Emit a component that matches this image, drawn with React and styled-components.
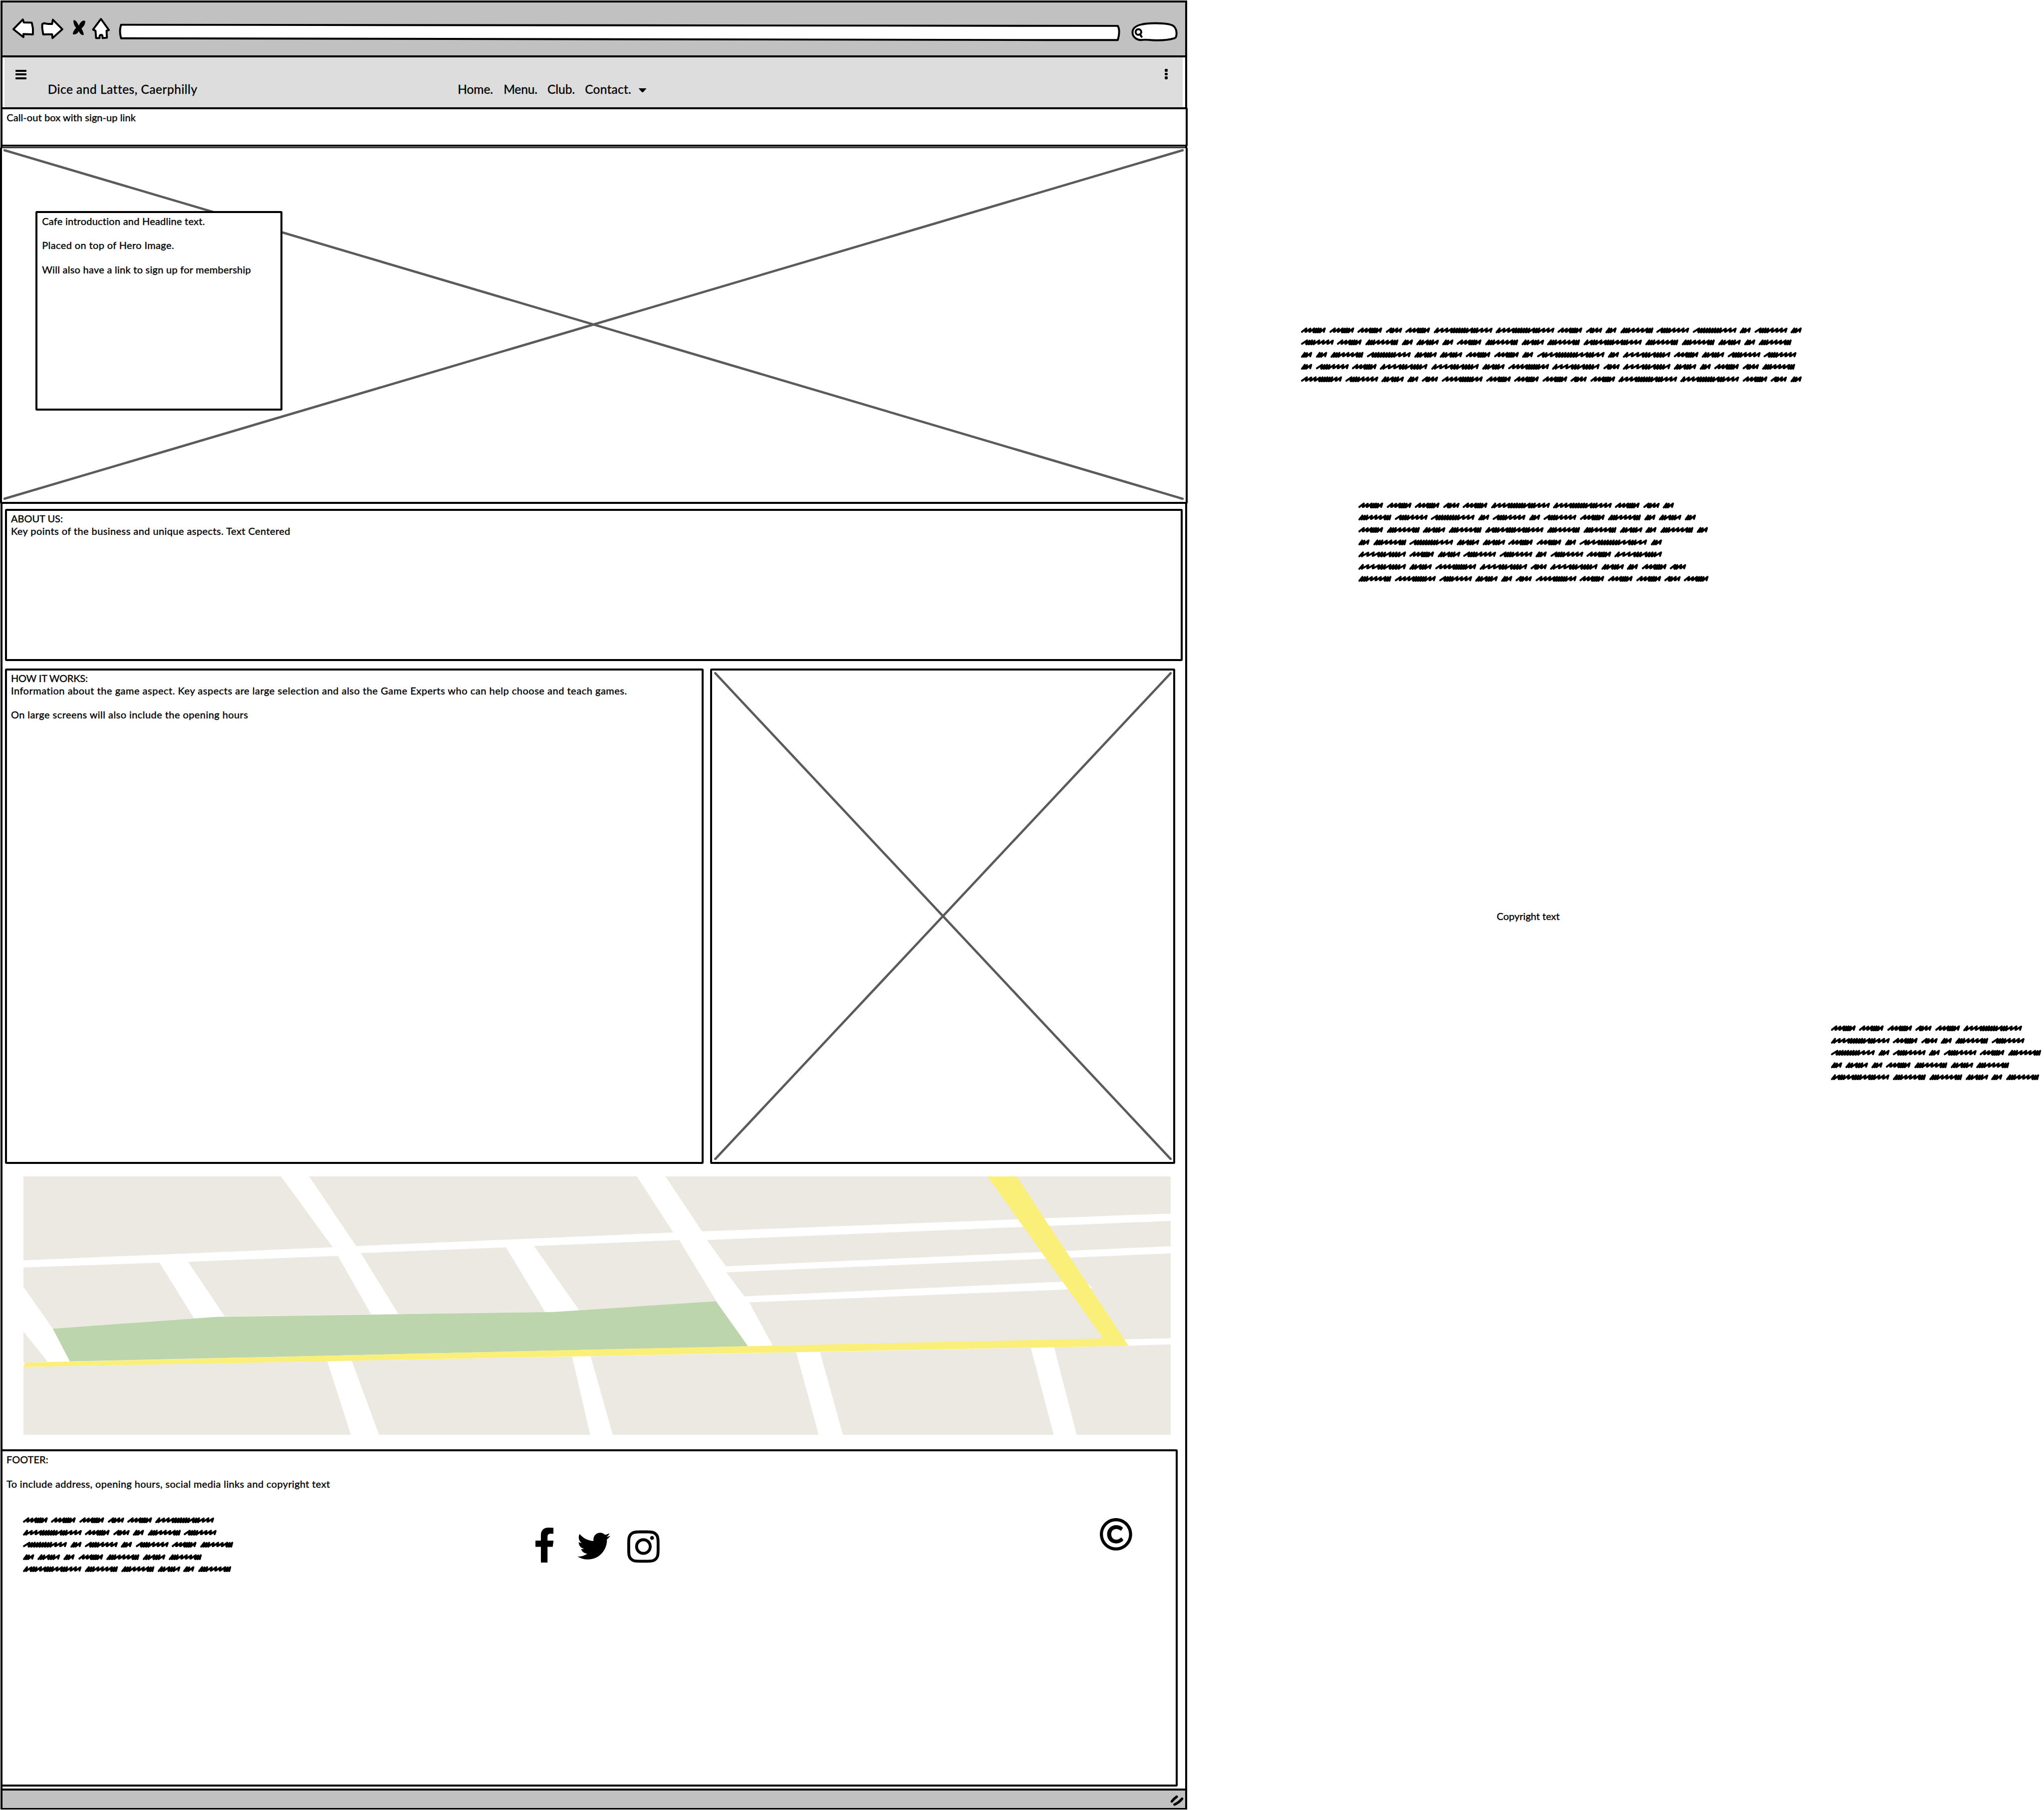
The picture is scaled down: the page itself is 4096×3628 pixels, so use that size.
import React from 'react';
import styled, { createGlobalStyle } from 'styled-components';
import { FaTwitter, FaInstagram, FaRegCopyright } from 'react-icons/fa';

const SCALE = 4096 / 5274;
const u = (n) => `${(n * SCALE).toFixed(3)}px`;

const GlobalStyle = createGlobalStyle`
  * { box-sizing: border-box; }
  body { margin: 0; background: #fff; color: #000; overflow: hidden; }
  svg { display: block; }
`;

const Board = styled.div`
  display: flex;
  width: 4096px;
  height: 3628px;
  font-family: Lato, "Liberation Sans", sans-serif;
  font-variant-ligatures: none;
  -webkit-text-stroke: 0.4px #000;
`;

const Browser = styled.div`
  flex: none;
  display: flex;
  flex-direction: column;
  width: ${u(3062)};
  height: ${u(4669)};
  margin: ${u(1)} 0 0 ${u(1)};
  border: 4px solid #000;
`;

const Toolbar = styled.div`
  flex: none;
  height: ${u(142)};
  background: #c1c1c1;
  border-bottom: 4px solid #000;
`;

const Nav = styled.nav`
  flex: none;
  height: ${u(129)};
  margin: 0 ${u(6)};
  padding-top: ${u(30)};
  background: #ddd;
`;

const NavTop = styled.div`
  display: flex;
  justify-content: space-between;
  align-items: flex-end;
  height: ${u(26)};
  padding: 0 ${u(39)} 0 ${u(27.5)};
`;

const Hamburger = styled.div`
  display: grid;
  gap: ${u(4)};
  width: ${u(28)};
  i { height: ${u(5.2)}; border-radius: 1px; background: #000; }
`;

const Kebab = styled.div`
  display: grid;
  gap: ${u(2)};
  width: ${u(7.3)};
  i { height: ${u(7.3)}; border-radius: 2px; background: #000; }
`;

const NavRow = styled.div`
  display: flex;
  margin-top: ${u(7)};
  padding-left: ${u(111)};
  font-size: ${u(31.5)};
  line-height: ${u(38)};
`;

const NavItem = styled.div`
  flex: none;
  width: ${(p) => u(p.$width)};
`;

const Caret = styled.div`
  width: ${u(19)};
  height: ${u(11)};
  margin-top: ${u(16.5)};
  background: #000;
  clip-path: polygon(0 0, 100% 0, 100% 12%, 60% 90%, 50% 100%, 40% 90%, 0 12%);
`;

const Line = styled.div`
  white-space: pre;
  letter-spacing: ${(p) => p.$tracking || 0}px;
`;

const Copy = styled.div`
  font-size: ${u(25.7)};
  line-height: ${u(31.3)};
`;

const Gap = styled.div`
  height: ${u(31.3)};
`;

const Box = styled.section`
  border: 4px solid #000;
  border-radius: 3px;
  background: #fff;
`;

const Callout = styled(Box)`
  flex: none;
  height: ${u(102)};
  margin: 0 -5px 0 -4px;
  padding: ${u(5)} 0 0 ${u(11)};
`;

const Hero = styled(Box)`
  position: relative;
  flex: none;
  height: ${u(920.5)};
  margin: ${u(1)} -5px 0 -5px;
  border-top-width: 2px;
`;

const Cross = styled.svg`
  position: absolute;
  left: ${(p) => u(p.$left)};
  top: ${(p) => u(p.$top)};
  width: ${(p) => u(p.$w)};
  height: ${(p) => u(p.$h)};
  stroke: #5b5b5b;
  stroke-width: 6;
`;

const HeroCard = styled(Box)`
  position: absolute;
  left: ${u(87)};
  top: ${u(162.5)};
  width: ${u(637)};
  height: ${u(514)};
  padding: ${u(4.5)} 0 0 ${u(11.5)};
`;

const About = styled(Box)`
  flex: none;
  height: ${u(393)};
  margin: ${u(12.5)} ${u(6)} 0 ${u(7)};
  padding: ${u(4.5)} 0 0 ${u(10)};
`;

const Split = styled.div`
  flex: none;
  display: flex;
  gap: ${u(17.5)};
  height: ${u(1279)};
  margin: ${u(19)} 0 0 ${u(7)};
`;

const HowItWorks = styled(Box)`
  width: ${u(1802)};
  padding: ${u(4.5)} 0 0 ${u(10)};
`;

const Picture = styled(Box)`
  position: relative;
  width: ${u(1200)};
`;

const Map = styled.svg`
  flex: none;
  width: ${u(2960)};
  height: ${u(667)};
  margin: ${u(32.5)} 0 0 ${u(54)};
`;

const Footer = styled(Box)`
  flex: none;
  height: ${u(870.5)};
  width: ${u(3038)};
  margin: ${u(37.5)} 0 0 -4px;
  padding: ${u(4.5)} 0 0 ${u(10.5)};
`;

const FooterRow = styled.div`
  display: flex;
  align-items: flex-start;
  margin: ${u(71)} 0 0 ${u(42.5)};
`;

const Address = styled.div`
  width: ${u(540)};
`;

const Social = styled.div`
  display: flex;
  align-items: flex-end;
  width: ${u(1455)};
  margin: ${u(27)} 0 0 ${u(782)};
`;

const Icon = styled.div`
  width: ${(p) => u(p.$w)};
  height: ${(p) => u(p.$h)};
  margin: ${(p) => u(p.$drop || 0)} ${(p) => u(p.$right || 0)} ${(p) => u(p.$lift || 0)} 0;
  svg { width: 100%; height: 100%; }
`;

const StatusBar = styled.div`
  flex: 1;
  display: flex;
  justify-content: flex-end;
  margin-top: ${u(4)};
  border-top: 4px solid #000;
  background: #c1c1c1;
`;

const Notes = styled.div`
  position: relative;
  flex: 1;
`;

const Note = styled.div`
  position: absolute;
  left: ${(p) => u(p.$x - 3063)};
  top: ${(p) => u(p.$y)};
`;

const ScribbleLine = styled.div`
  display: flex;
  height: ${u(31.6)};
`;

const Word = styled.svg`
  flex: none;
  overflow: visible;
  width: ${(p) => u(p.$w)};
  height: ${u(16)};
  fill: none;
  stroke: #000;
  stroke-width: 5;
  stroke-linecap: round;
  stroke-linejoin: round;
`;

/* width of the drawn word, advance to the next word, rhythm of loose and tight strokes */
const WORDS = {
  A: [64, 72.8, 'sssddds'],
  B: [42.3, 50.7, 'sdss'],
  C: [152, 160, 'dsssddddddsddsss'],
  D: [29, 38, 'dds'],
  E: [85.4, 93.8, 'dddssssdd'],
  F: [85, 93.1, 'sdddssss'],
  G: [113.5, 122, 'sddddddddsss'],
  H: [58.5, 66.5, 'ddsdds'],
  I: [151, 159.8, 'dsddssdddssddsss'],
  J: [174.5, 183.6, 'sdssdddddddssddss'],
  K: [123, 131.6, 'dsssddsddds'],
  L: [106, 114.4, 'ssssdddddss'],
};

const wordPath = (key) => {
  const [width, , rhythm] = WORDS[key];
  const steps = [...rhythm].map((c) => (c === 's' ? 1.8 : 1));
  const total = steps.reduce((a, b) => a + b, 0);
  const k = (width - 6.5) / total;
  let x = 2.6;
  let d = '';
  steps.forEach((s, i) => {
    const low = s === 1 ? 13 : 11.8;
    d += `${i ? 'L' : 'M'}${x.toFixed(1)} ${low}L${(x + s * k + 1.4).toFixed(1)} ${3 + (i % 2) * 0.5}`;
    x += s * k;
    d += `L${(x - 1.2).toFixed(1)} ${low}`;
  });
  return d;
};

const Scribble = ({ lines }) => (
  <div>
    {lines.map((line, i) => (
      <ScribbleLine key={i}>
        {[...line].map((c, j) => (
          <Word key={j} $w={WORDS[c][1]} viewBox={`0 0 ${WORDS[c][1]} 16`}>
            <path d={wordPath(c)} />
          </Word>
        ))}
      </ScribbleLine>
    ))}
  </div>
);

const WIDE = ['AAABACCABDEFGDFD', 'FAEDHDAEHEIEEHDE', 'DDEGHHAADJDKAHFF', 'DFAKKHLKBKHDABE', 'LFHDBLAAABACCABD'];
const MEDIUM = ['AAABACCABD', 'EFGDFDFAEDHD', 'AEHEIEEHDED', 'DEGHHAADJD', 'KAHFFDFAK', 'KHLKBKHDAB', 'ELFHDBLAAABA'];
const NARROW = ['AAABAC', 'CABDEF', 'GDFDFAE', 'DHDAEHE', 'IEEHDE'];

const BLOCKS = [
  '60,3036 724.5,3036 858,3219 60,3252.5',
  '797,3036 1642.9,3036 1736.7,3180.8 918.4,3215.7',
  '1716.3,3036 3020,3036 3020,3131.8 1811.2,3177.9',
  '60,3271 411.2,3258.8 500,3402.3 135.7,3429 60,3320.9',
  '484.7,3256.4 871.4,3240.9 957,3392.1 579.6,3397.5',
  '930.6,3234.1 1305,3219.1 1406,3385.8 1027.6,3391.7',
  '1377.6,3215.7 1752,3200.2 1848,3358.2 1493.9,3381.5',
  '1823.5,3200.2 3020,3150.8 3020,3216.2 1872.4,3268',
  '1873.5,3283.6 3020,3234.6 3020,3453.7 2885,3456.6 2805,3325.2 2819.4,3324.8 2808,3315 2739.8,3307.8 1920.4,3345.6',
  '1932.7,3361.1 2755,3327.7 2800,3326 2860,3460 1992.9,3472.6',
  '60,3436.3 122.4,3514.3 60,3517',
  '60,3527.9 843.9,3512.8 905,3703 60,3703',
  '907,3511.4 1475.5,3501.2 1522.4,3703 977.6,3703',
  '1523.5,3500.2 2054,3490 2112,3703 1580.6,3703',
  '2115.3,3489.1 2659.2,3478.4 2718.4,3703 2174.5,3703',
  '2719.4,3477 2911,3473 3020,3469.2 3020,3703 2777.6,3703',
];

const BrowserChrome = () => (
  <svg viewBox="6 6 3052 137" width="100%" height="100%" preserveAspectRatio="none" fill="#fff" stroke="#000" strokeWidth="5" strokeLinejoin="round" strokeLinecap="round">
    <path d="M34 75L58.5 50L61 57.5L81.5 58L84.5 73L84.5 88.5L60 87.5L60 95.5Z" />
    <path d="M108.5 62L113 59.5L124 61.5L134 61.5L136 50.5L160.5 75L135 98L134 88L111 88.5L108.5 72Z" />
    <path stroke="none" fill="#000" d="M189 52C196 50 200 60 203 66C207 56 214 50 219.5 54C220 64 213 70 210 73C213 80 216 84 215.5 90C208 91 205 84 203 80C200 86 193 90 187.5 88C188 80 193 75 196 71C191 66 189 60 189 52Z" />
    <path d="M260 48.5L280.5 77L274.5 79L275.5 97L264.5 98L263.5 90.5L260 89.5L257 91L256 98L247.5 98L246 79L239.5 76Z" />
    <path d="M312 63.5L2884 66.5Q2891 78 2884 103L2700 103L312 98.5Q306.5 80 312 63.5Z" />
    <path d="M2922 83C2922 68 2940 59.5 2981 59.5C3005 59.5 3025 62 3030 69C3034 74 3036 82 3035.5 88C3035 97 3032 98 3028 99C3010 104 2990 104.5 2970 103C2960 102 2950 102 2943 103C2932 102 2922 95 2922 83Z" />
    <circle cx="2937.3" cy="82.3" r="7.3" />
    <path d="M2941 88L2945.5 94.5" />
  </svg>
);

export default function App() {
  return (
    <Board>
      <GlobalStyle />
      <Browser>
        <Toolbar><BrowserChrome /></Toolbar>
        <Nav>
          <NavTop>
            <Hamburger><i /><i /><i /></Hamburger>
            <Kebab><i /><i /><i /></Kebab>
          </NavTop>
          <NavRow>
            <NavItem $width={1058}><Line $tracking={0.53}>Dice and Lattes, Caerphilly</Line></NavItem>
            <NavItem $width={118.3}><Line $tracking={-0.05}>Home.</Line></NavItem>
            <NavItem $width={113}><Line $tracking={-0.14}>Menu.</Line></NavItem>
            <NavItem $width={97}><Line>Club.</Line></NavItem>
            <NavItem $width={139}><Line $tracking={0.28}>Contact.</Line></NavItem>
            <Caret />
          </NavRow>
        </Nav>
        <Callout><Copy><Line $tracking={0.1}>Call-out box with sign-up link</Line></Copy></Callout>
        <Hero>
          <Cross $left={4.5} $top={2} $w={3045} $h={905} viewBox="0 0 3045 905" preserveAspectRatio="none">
            <path d="M0 2L3045 903M0 903L3045 2" />
          </Cross>
          <HeroCard>
            <Copy>
              <Line $tracking={0.26}>Cafe introduction and Headline text.</Line>
              <Gap />
              <Line $tracking={0.4}>Placed on top of Hero Image.</Line>
              <Gap />
              <Line $tracking={0.28}>Will also have a link to sign up for membership</Line>
            </Copy>
          </HeroCard>
        </Hero>
        <About>
          <Copy>
            <Line $tracking={0.03}>ABOUT US:</Line>
            <Line $tracking={0.45}>Key points of the business and unique aspects. Text Centered</Line>
          </Copy>
        </About>
        <Split>
          <HowItWorks>
            <Copy>
              <Line $tracking={-0.17}>HOW IT WORKS:</Line>
              <Line $tracking={0.535}>Information about the game aspect. Key aspects are large selection and also the Game Experts who can help choose and teach games.</Line>
              <Gap />
              <Line $tracking={0.46}>On large screens will also include the opening hours</Line>
            </Copy>
          </HowItWorks>
          <Picture>
            <Cross $left={4.5} $top={4} $w={1181} $h={1260} viewBox="0 0 1181 1260" preserveAspectRatio="none">
              <path d="M1 1L1180 1259M1 1259L1180 1" />
            </Cross>
          </Picture>
        </Split>
        <Map viewBox="60 3036 2960 667" preserveAspectRatio="none">
          {BLOCKS.map((p) => <polygon key={p} points={p} fill="#ece9e2" />)}
          <polygon fill="#bcd5ad" points="135.7,3429 500,3402.5 561,3398.5 1428.6,3385.8 1847,3358.2 1929.6,3474.5 179.6,3513.5" />
          <polygon fill="#faef78" points="2546.9,3036 2622.4,3036 2911.2,3473.1 60,3527.9 64,3516.7 1600,3481.3 2845.9,3454.2" />
        </Map>
        <Footer>
          <Copy>
            <Line $tracking={0.09}>FOOTER:</Line>
            <Gap />
            <Line $tracking={0.39}>To include address, opening hours, social media links and copyright text</Line>
          </Copy>
          <FooterRow>
            <Address><Scribble lines={NARROW} /></Address>
            <Social>
              <Icon $w={47.5} $h={90.5} $right={61.5}>
                <svg viewBox="122 131 142 270" preserveAspectRatio="none"><path d="M164 401V279H122V231H164V190C164 152 185 131 222 131C240 131 255 132 264 134V178H238C222 178 215 187 215 203V231H262L255 279H215V401Z" /></svg>
              </Icon>
              <Icon $w={85} $h={85} $right={43.5}><FaTwitter /></Icon>
              <Icon $w={83.3} $h={95.2} $lift={-6}><FaInstagram /></Icon>
            </Social>
            <Icon $w={86} $h={86} $drop={1}><FaRegCopyright /></Icon>
          </FooterRow>
        </Footer>
        <StatusBar>
          <svg width={u(40)} height={u(45)} viewBox="3018 4620 40 45" stroke="#000" strokeWidth="6.5" strokeLinecap="round">
            <path d="M3023.5 4648Q3029 4641 3036 4636M3030.5 4656Q3042 4651 3050 4641" fill="none" />
          </svg>
        </StatusBar>
      </Browser>
      <Notes>
        <Note $x={3357} $y={844.5}><Scribble lines={WIDE} /></Note>
        <Note $x={3505} $y={1296.5}><Scribble lines={MEDIUM} /></Note>
        <Note $x={3862} $y={2348.5}><Copy><Line $tracking={0.02}>Copyright text</Line></Copy></Note>
        <Note $x={4724} $y={2646}><Scribble lines={NARROW} /></Note>
      </Notes>
    </Board>
  );
}
